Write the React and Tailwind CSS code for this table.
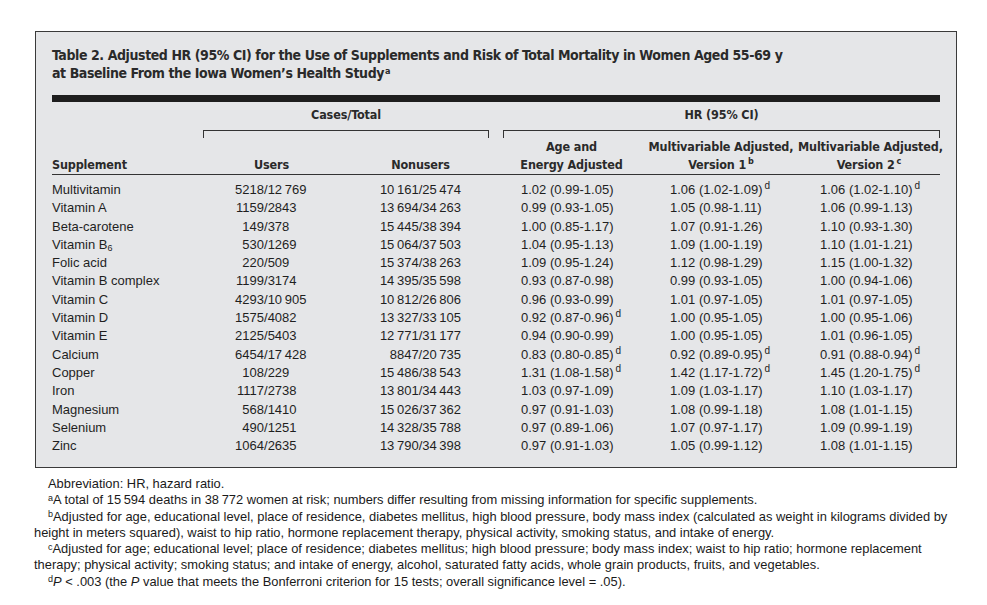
const rows = [
  ["Multivitamin", "5218", "12\u2009769", "10\u2009161/25\u2009474", "1.02 (0.99-1.05)", "", "1.06 (1.02-1.09)", "d", "1.06 (1.02-1.10)", "d"],
  ["Vitamin A", "1159", "2843", "13\u2009694/34\u2009263", "0.99 (0.93-1.05)", "", "1.05 (0.98-1.11)", "", "1.06 (0.99-1.13)", ""],
  ["Beta-carotene", "149", "378", "15\u2009445/38\u2009394", "1.00 (0.85-1.17)", "", "1.07 (0.91-1.26)", "", "1.10 (0.93-1.30)", ""],
  ["B6", "530", "1269", "15\u2009064/37\u2009503", "1.04 (0.95-1.13)", "", "1.09 (1.00-1.19)", "", "1.10 (1.01-1.21)", ""],
  ["Folic acid", "220", "509", "15\u2009374/38\u2009263", "1.09 (0.95-1.24)", "", "1.12 (0.98-1.29)", "", "1.15 (1.00-1.32)", ""],
  ["Vitamin B complex", "1199", "3174", "14\u2009395/35\u2009598", "0.93 (0.87-0.98)", "", "0.99 (0.93-1.05)", "", "1.00 (0.94-1.06)", ""],
  ["Vitamin C", "4293", "10\u2009905", "10\u2009812/26\u2009806", "0.96 (0.93-0.99)", "", "1.01 (0.97-1.05)", "", "1.01 (0.97-1.05)", ""],
  ["Vitamin D", "1575", "4082", "13\u2009327/33\u2009105", "0.92 (0.87-0.96)", "d", "1.00 (0.95-1.05)", "", "1.00 (0.95-1.06)", ""],
  ["Vitamin E", "2125", "5403", "12\u2009771/31\u2009177", "0.94 (0.90-0.99)", "", "1.00 (0.95-1.05)", "", "1.01 (0.96-1.05)", ""],
  ["Calcium", "6454", "17\u2009428", "8847/20\u2009735", "0.83 (0.80-0.85)", "d", "0.92 (0.89-0.95)", "d", "0.91 (0.88-0.94)", "d"],
  ["Copper", "108", "229", "15\u2009486/38\u2009543", "1.31 (1.08-1.58)", "d", "1.42 (1.17-1.72)", "d", "1.45 (1.20-1.75)", "d"],
  ["Iron", "1117", "2738", "13\u2009801/34\u2009443", "1.03 (0.97-1.09)", "", "1.09 (1.03-1.17)", "", "1.10 (1.03-1.17)", ""],
  ["Magnesium", "568", "1410", "15\u2009026/37\u2009362", "0.97 (0.91-1.03)", "", "1.08 (0.99-1.18)", "", "1.08 (1.01-1.15)", ""],
  ["Selenium", "490", "1251", "14\u2009328/35\u2009788", "0.97 (0.89-1.06)", "", "1.07 (0.97-1.17)", "", "1.09 (0.99-1.19)", ""],
  ["Zinc", "1064", "2635", "13\u2009790/34\u2009398", "0.97 (0.91-1.03)", "", "1.05 (0.99-1.12)", "", "1.08 (1.01-1.15)", ""],
];

const cond = { fontFamily: "'DejaVu Sans Condensed', 'Liberation Sans', sans-serif" };
const grid = "grid grid-cols-[151px_143px_143px_14px_143px_150px_144px]";

function Hr({ v, s }) {
  return (
    <span>
      {v}
      {s && <sup className="ml-[2px] text-[10px]">{s}</sup>}
    </span>
  );
}

export default function App() {
  return (
    <div className="min-h-screen bg-white pt-[31px] pl-[35px] text-[#1f1f1f]" style={{ fontFamily: "'Liberation Sans', Arial, sans-serif" }}>
      <div className="w-[922px] h-[437px] border border-[#3a3a3a] bg-[#e5e6e8] pt-[14px] pl-[16px]">
        <h1 className="text-[14px] leading-[18px] font-bold tracking-[-0.42px] text-[#2a2a2a]" style={cond}>
          Table 2. Adjusted HR (95% CI) for the Use of Supplements and Risk of Total Mortality in Women Aged 55-69 y
          <br />
          at Baseline From the Iowa Women’s Health Study<sup className="ml-[1px] text-[9px]">a</sup>
        </h1>
        <div className="mt-[13px] h-[7px] w-[888px] bg-[#1e1e1e]" />

        <div style={cond} className="font-bold text-[12.5px] tracking-[-0.15px] text-[#2a2a2a]">
          <div className={grid + " mt-[4px] leading-[18px]"}>
            <div />
            <div className="col-span-2 text-center">Cases/Total</div>
            <div />
            <div className="col-span-3 text-center">HR (95% CI)</div>
          </div>
          <div className={grid + " mt-[6px]"}>
            <div />
            <div className="col-span-2 h-[8px] border-t-[1.5px] border-x-[1.5px] border-[#333]" />
            <div />
            <div className="col-span-3 h-[8px] border-t-[1.5px] border-x-[1.5px] border-[#333]" />
          </div>
          <div className={grid + " items-end leading-[17.5px] pb-[1px] w-[888px] border-b border-[#333]"}>
            <div>Supplement</div>
            <div className="text-center pr-[6px]">Users</div>
            <div className="text-center pl-[6px]">Nonusers</div>
            <div />
            <div className="text-center pr-[6px]">
              Age and
              <br />
              Energy Adjusted
            </div>
            <div className="text-center whitespace-nowrap">
              Multivariable Adjusted,
              <br />
              Version 1<sup className="ml-[2px] text-[9px]">b</sup>
            </div>
            <div className="text-center whitespace-nowrap pl-[2px]">
              Multivariable Adjusted,
              <br />
              Version 2<sup className="ml-[2px] text-[9px]">c</sup>
            </div>
          </div>
        </div>

        <div className="pt-[6px] text-[13px]">
          {rows.map((r) => (
            <div key={r[0]} className={grid + " h-[18.3px] leading-[18.3px] whitespace-nowrap"}>
              <div>
                {r[0] === "B6" ? (
                  <span>
                    Vitamin B<sub className="text-[9px]">6</sub>
                  </span>
                ) : (
                  r[0]
                )}
              </div>
              <div className="flex">
                <span className="w-[61px] text-right">{r[1]}</span>
                <span>/{r[2]}</span>
              </div>
              <div className="text-right pr-[28px]">{r[3]}</div>
              <div />
              <div className="pl-[18px]">
                <Hr v={r[4]} s={r[5]} />
              </div>
              <div className="pl-[24px]">
                <Hr v={r[6]} s={r[7]} />
              </div>
              <div className="pl-[24px]">
                <Hr v={r[8]} s={r[9]} />
              </div>
            </div>
          ))}
        </div>
      </div>

      <div className="mt-[8px] -ml-[1px] w-[916px] text-[12.9px] leading-[16.3px] text-[#1a1a1a] [&>p]:indent-[14px] [&_sup]:top-[-0.4em]">
        <p>Abbreviation: HR, hazard ratio.</p>
        <p>
          <sup className="text-[9px]">a</sup>A total of 15{"\u2009"}594 deaths in 38{"\u2009"}772 women at risk; numbers differ resulting from missing information for specific supplements.
        </p>
        <p>
          <sup className="text-[9px]">b</sup>Adjusted for age, educational level, place of residence, diabetes mellitus, high blood pressure, body mass index (calculated as weight in kilograms divided by height in meters squared), waist to hip ratio, hormone replacement therapy, physical activity, smoking status, and intake of energy.
        </p>
        <p>
          <sup className="text-[9px]">c</sup>Adjusted for age; educational level; place of residence; diabetes mellitus; high blood pressure; body mass index; waist to hip ratio; hormone replacement therapy; physical activity; smoking status; and intake of energy, alcohol, saturated fatty acids, whole grain products, fruits, and vegetables.
        </p>
        <p>
          <sup className="text-[9px]">d</sup>
          <i>P</i> &lt; .003 (the <i>P</i> value that meets the Bonferroni criterion for 15 tests; overall significance level = .05).
        </p>
      </div>
    </div>
  );
}
